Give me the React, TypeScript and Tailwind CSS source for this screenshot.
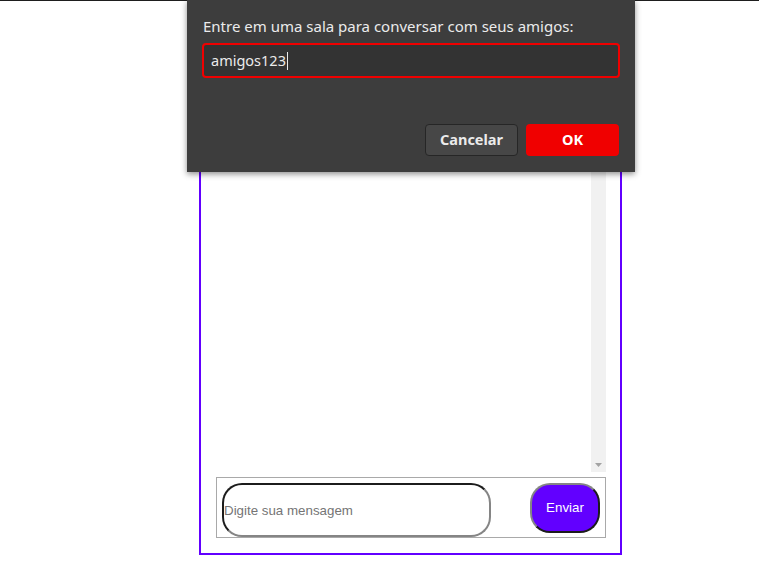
import React from "react";

export default function App() {
  return (
    <div className="relative min-h-[568px] w-[759px] bg-white" style={{ fontFamily: '"Liberation Sans", Arial, sans-serif' }}>
      <div className="h-px w-full bg-[#1e1e1e]" />
      <div className="ml-[199px] mt-[8px] flex h-[546px] w-[423px] flex-col border-2 border-[#6200ff] pl-[15px] pr-[14px] pt-[15px] pb-[15px]">
        <div className="flex min-h-0 flex-1">
          <div className="flex-1" />
          <div className="flex w-[15px] flex-col justify-end bg-[#f1f1f1]">
            <svg width="15" height="15" viewBox="0 0 15 15" className="block">
              <path d="M4 6 L11 6 L7.5 10 Z" fill="#a3a3a3" />
            </svg>
          </div>
        </div>
        <form
          className="mt-[5px] flex h-[61px] items-start justify-between border border-[#a9a9a9] p-[5px]"
          onSubmit={(e) => e.preventDefault()}
        >
          <input
            type="text"
            placeholder="Digite sua mensagem"
            className="h-[54px] w-[269px] rounded-[20px] border-2 border-b-[#858585] border-l-[#1c1c1c] border-r-[#858585] border-t-[#1c1c1c] bg-white px-0 text-[13.33px] text-black outline-none placeholder:text-[#757575]"
          />
          <button
            type="submit"
            className="h-[50px] w-[70px] rounded-[20px] border-2 border-b-[#1c1c1c] border-l-[#858585] border-r-[#1c1c1c] border-t-[#858585] bg-[#6200ff] text-[13.33px] text-white"
          >
            Enviar
          </button>
        </form>
      </div>

      <div
        className="absolute left-[187px] top-0 flex h-[172px] w-[448px] flex-col bg-[#3d3d3d] px-[16px] pt-[14px] pb-[16px] shadow-[0_2px_6px_rgba(0,0,0,0.45)]"
        style={{ fontFamily: '"Noto Sans", "Open Sans", sans-serif' }}
      >
        <div className="text-[15px] leading-[24px] text-[#ebebeb]">Entre em uma sala para conversar com seus amigos:</div>
        <div className="mt-[5px] flex h-[35px] w-[418px] -ml-[1px] items-center rounded-[4px] border-2 border-[#f00000] bg-[#333333] px-[7px] text-[14.5px] text-[#ebebeb]">
          amigos123<span className="ml-px inline-block h-[18px] w-px bg-[#ebebeb]" />
        </div>
        <div className="mt-auto flex justify-end gap-[8px]">
          <button className="h-[32px] w-[93px] rounded-[4px] border border-[#262626] bg-[#474747] text-[14.5px] font-bold text-[#ebebeb]">
            Cancelar
          </button>
          <button className="h-[32px] w-[93px] rounded-[4px] bg-[#f00000] text-[14.5px] font-bold text-white">
            OK
          </button>
        </div>
      </div>
    </div>
  );
}
